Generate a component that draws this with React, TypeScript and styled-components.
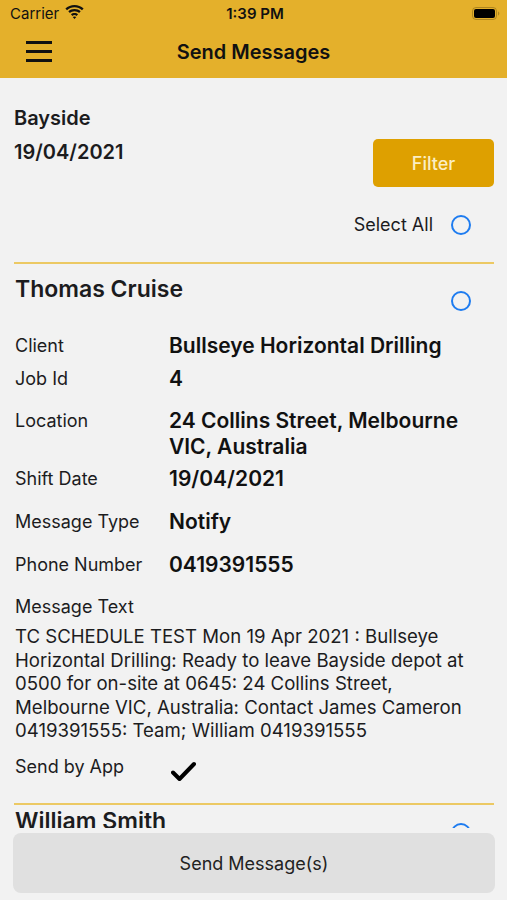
import styled, { createGlobalStyle } from 'styled-components'

const GlobalStyle = createGlobalStyle`
body {
  margin: 0;
  background: #f2f2f2;
  font-family: Inter, "Noto Sans", "Liberation Sans", sans-serif;
  color: #1c1c1e;
}
`;

type Job = {
  name: string
  client: string
  jobId: string
  location: string
  shiftDate: string
  messageType: string
  phone: string
  text: string
}

const jobs: Job[] = [
  {
    name: 'Thomas Cruise',
    client: 'Bullseye Horizontal Drilling',
    jobId: '4',
    location: '24 Collins Street, Melbourne VIC, Australia',
    shiftDate: '19/04/2021',
    messageType: 'Notify',
    phone: '0419391555',
    text: 'TC SCHEDULE TEST Mon 19 Apr 2021 : Bullseye Horizontal Drilling: Ready to leave Bayside depot at 0500 for on-site at 0645: 24 Collins Street, Melbourne VIC, Australia: Contact James Cameron 0419391555: Team; William 0419391555',
  },
  {
    name: 'William Smith',
    client: 'Bullseye Horizontal Drilling',
    jobId: '4',
    location: '24 Collins Street, Melbourne VIC, Australia',
    shiftDate: '19/04/2021',
    messageType: 'Notify',
    phone: '0419391555',
    text: 'TC SCHEDULE TEST Mon 19 Apr 2021 : Bullseye Horizontal Drilling',
  },
]

const Wifi = () => (
  <svg width="19" height="14" viewBox="0 0 19 14">
    <path d="M9.5 2.2c2.9 0 5.5 1.1 7.5 3l1.6-1.7C16.2 1.3 13 0 9.5 0S2.8 1.3.4 3.5L2 5.2c2-1.9 4.6-3 7.5-3z" fill="#111" />
    <path d="M9.5 6.2c1.8 0 3.4.7 4.6 1.8l1.6-1.7C14.1 4.8 11.9 4 9.5 4S4.9 4.8 3.3 6.3L4.9 8c1.2-1.1 2.8-1.8 4.6-1.8z" fill="#111" />
    <path d="M9.5 10.1c.8 0 1.5.3 2 .8l1.6-1.7C12.2 8.4 10.9 7.9 9.5 7.9s-2.7.5-3.6 1.3l1.6 1.7c.5-.5 1.2-.8 2-.8zM9.5 14l1.8-1.9c-.5-.4-1.1-.6-1.8-.6s-1.3.2-1.8.6z" fill="#111" />
  </svg>
)

const Battery = () => (
  <svg width="28" height="13" viewBox="0 0 28 13">
    <rect x="0.5" y="0.5" width="24" height="12" rx="3.5" fill="none" stroke="#8a6a18" strokeOpacity="0.6" />
    <rect x="2" y="2" width="21" height="9" rx="2" fill="#000" />
    <path d="M26 4.5v4c.8-.3 1.3-1.1 1.3-2s-.5-1.7-1.3-2z" fill="#8a6a18" fillOpacity="0.6" />
  </svg>
)

const Check = () => (
  <svg width="25" height="21" viewBox="0 0 25 21">
    <path d="M2 11.5l6.5 6.5L23 3" fill="none" stroke="#000" strokeWidth="4" strokeLinecap="round" strokeLinejoin="round" />
  </svg>
)

const Row = ({ label, value, $mt }: { label: string; value: string; $mt: number }) => (
  <Field $mt={$mt}>
    <Label>{label}</Label>
    <Value>{value}</Value>
  </Field>
)

const Card = ({ job, first }: { job: Job; first: boolean }) => (
  <CardBox $pt={first ? 11 : 2}>
    <NameRow>
      <Name>{job.name}</Name>
      <Radio $top={16} />
    </NameRow>
    <Row label="Client" value={job.client} $mt={22} />
    <Row label="Job Id" value={job.jobId} $mt={7} />
    <Row label="Location" value={job.location} $mt={16} />
    <Row label="Shift Date" value={job.shiftDate} $mt={6} />
    <Row label="Message Type" value={job.messageType} $mt={17} />
    <Row label="Phone Number" value={job.phone} $mt={17} />
    <Field $mt={16}>
      <Label>Message Text</Label>
    </Field>
    <MessageBody>{job.text}</MessageBody>
    <Field $mt={11}>
      <Label>Send by App</Label>
      <CheckCell>
        <Check />
      </CheckCell>
    </Field>
    <Divider $mt={23} />
  </CardBox>
)

const App = () => {
  return (
    <Screen>
      <GlobalStyle />
      <Header>
        <StatusBar>
          <Carrier>
            Carrier <Wifi />
          </Carrier>
          <Time>1:39 PM</Time>
          <BatteryBox>
            <Battery />
          </BatteryBox>
        </StatusBar>
        <NavBar>
          <Burger>
            <span />
            <span />
            <span />
          </Burger>
          <Title>Send Messages</Title>
        </NavBar>
      </Header>
      <Scroll>
        <Top>
          <Depot>
            <DepotName>Bayside</DepotName>
            <DepotDate>19/04/2021</DepotDate>
          </Depot>
          <FilterButton>Filter</FilterButton>
        </Top>
        <SelectAll>
          <span>Select All</span>
          <Radio $top={0} />
        </SelectAll>
        <Divider $mt={25} />
        {jobs.map((j, i) => (
          <Card key={j.name} job={j} first={i === 0} />
        ))}
      </Scroll>
      <Footer>
        <SendButton>Send Message(s)</SendButton>
      </Footer>
    </Screen>
  )
}

export default App

const Screen = styled.div`
height: 100vh;
display: flex;
flex-direction: column;
overflow: hidden;
`;

const Header = styled.div`
background-color: #e4b02b;
height: 78px;
flex-shrink: 0;
`;

const StatusBar = styled.div`
height: 26px;
display: grid;
grid-template-columns: 1fr auto 1fr;
align-items: center;
padding: 0 7px 0 10px;
font-size: 15px;
`;

const Carrier = styled.div`
display: flex;
align-items: center;
gap: 6px;
font-weight: 400;
color: #111;
svg {
  margin-top: -3px;
}
`;

const Time = styled.div`
font-weight: 600;
color: #111;
`;

const BatteryBox = styled.div`
display: flex;
justify-content: flex-end;
`;

const NavBar = styled.div`
height: 52px;
display: flex;
align-items: center;
justify-content: center;
position: relative;
`;

const Burger = styled.div`
position: absolute;
left: 26px;
top: 15px;
display: flex;
flex-direction: column;
gap: 6px;
span {
  display: block;
  width: 26px;
  height: 3px;
  background: #111;
}
`;

const Title = styled.div`
font-size: 20px;
font-weight: 600;
color: #111;
margin-top: -1px;
`;

const Scroll = styled.div`
flex: 1;
overflow: hidden;
padding: 0 13px 0 14px;
`;

const Top = styled.div`
display: flex;
justify-content: space-between;
align-items: flex-start;
padding-top: 28px;
`;

const Depot = styled.div`
display: flex;
flex-direction: column;
gap: 10px;
`;

const DepotName = styled.div`
font-size: 20px;
font-weight: 600;
line-height: 24px;
`;

const DepotDate = styled.div`
font-size: 20px;
font-weight: 600;
line-height: 24px;
`;

const FilterButton = styled.button`
margin-top: 33px;
width: 121px;
height: 48px;
border: none;
border-radius: 5px;
background-color: #dea000;
color: #fbeec4;
font-family: inherit;
font-size: 18px;
font-weight: 500;
`;

const SelectAll = styled.div`
display: flex;
justify-content: flex-end;
align-items: center;
gap: 18px;
margin-top: 26px;
padding-right: 23px;
font-size: 18px;
line-height: 24px;
`;

const Radio = styled.div<{ $top: number }>`
width: 20px;
height: 20px;
box-sizing: border-box;
border-radius: 50%;
border: 2.5px solid #1e7cf0;
margin-top: ${(p) => p.$top}px;
flex-shrink: 0;
`;

const Divider = styled.div<{ $mt: number }>`
height: 2px;
background-color: #ecc964;
margin-top: ${(p) => p.$mt}px;
`;

const CardBox = styled.div<{ $pt: number }>`
padding-top: ${(p) => p.$pt}px;
`;

const NameRow = styled.div`
display: flex;
justify-content: space-between;
align-items: flex-start;
padding-left: 1px;
padding-right: 23px;
`;

const Name = styled.div`
font-size: 23px;
font-weight: 600;
line-height: 28px;
`;

const Field = styled.div<{ $mt: number }>`
display: grid;
grid-template-columns: 154px 1fr;
align-items: start;
margin-top: ${(p) => p.$mt}px;
padding-left: 1px;
`;

const Label = styled.div`
font-size: 18px;
line-height: 26px;
color: #1c1c1e;
`;

const Value = styled.div`
font-size: 21px;
font-weight: 600;
line-height: 26px;
color: #111;
`;

const MessageBody = styled.div`
margin-top: 5px;
padding-left: 1px;
padding-right: 12px;
font-size: 18.6px;
line-height: 23.5px;
color: #1c1c1e;
`;

const CheckCell = styled.div`
height: 26px;
padding-left: 2px;
svg {
  display: block;
  margin-top: 7px;
}
`;

const Footer = styled.div`
flex-shrink: 0;
height: 72px;
box-sizing: border-box;
padding: 5px 12px 7px 13px;
`;

const SendButton = styled.button`
width: 100%;
height: 60px;
border: none;
border-radius: 8px;
background-color: #e0e0e0;
color: #222;
font-family: inherit;
font-size: 18px;
`;
